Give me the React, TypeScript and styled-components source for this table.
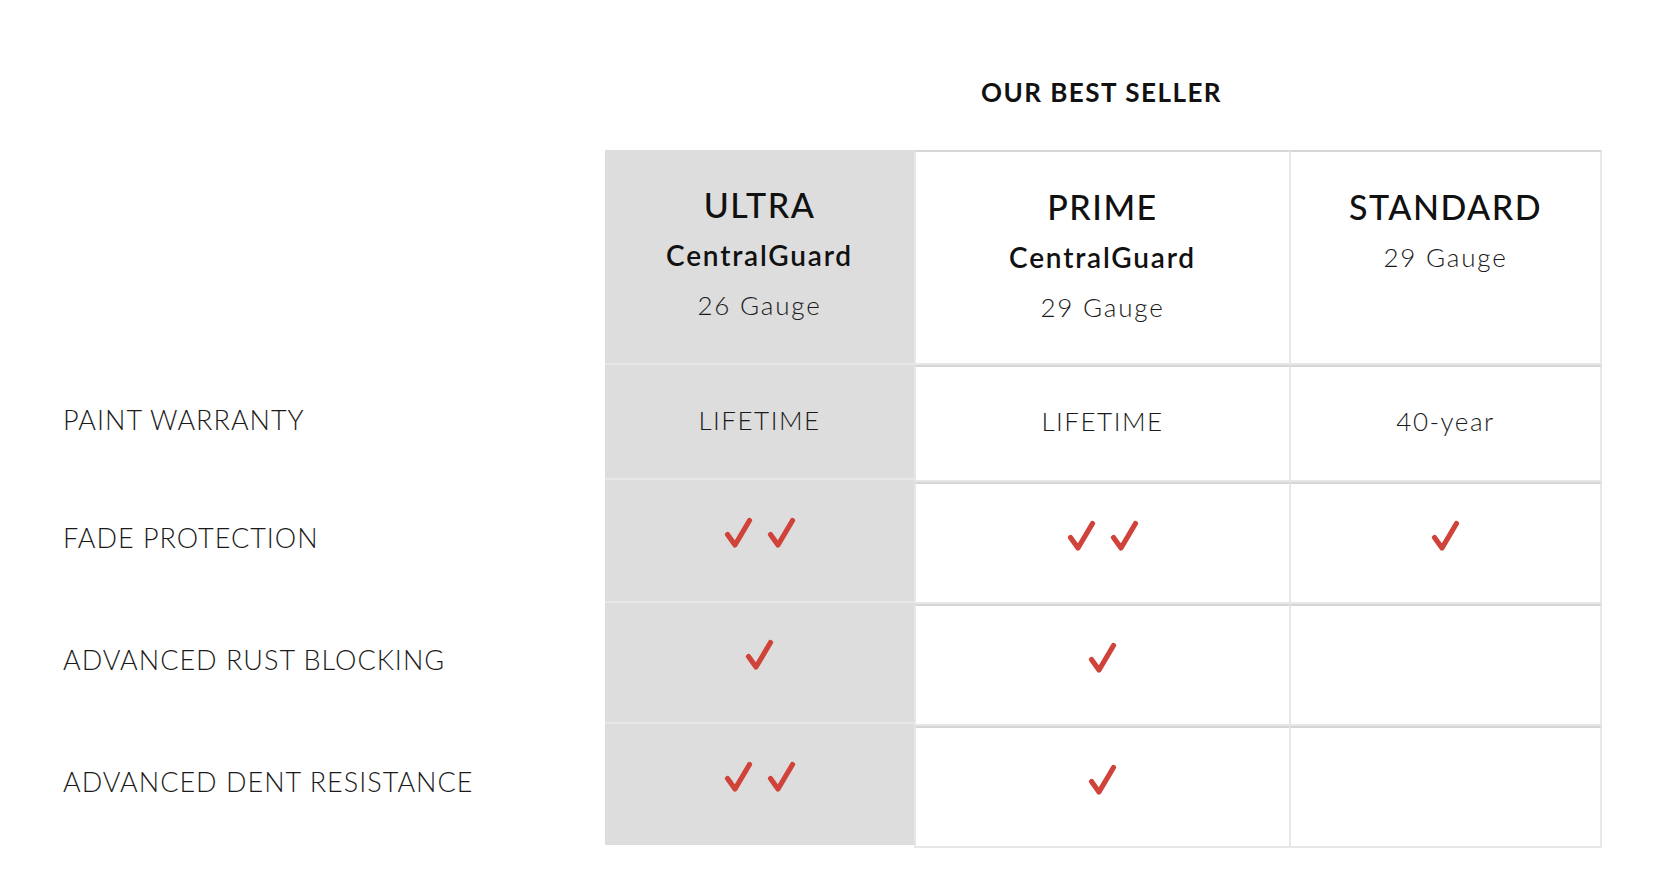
import React from 'react';
import styled, { createGlobalStyle } from 'styled-components';

const GlobalStyle = createGlobalStyle`
html, body {
    margin: 0;
    padding: 0;
    background: #fff;
}
body {
    font-family: 'Lato', 'Liberation Sans', sans-serif;
    color: #111;
}
`;

const Page = styled.div`
box-sizing: border-box;
width: 1676px;
`;

const TitleRow = styled.div`
display: grid;
grid-template-columns: 605px 309px 375px 313px;
height: 150px;
`;

const Title = styled.h2`
grid-column: 3;
margin: 0;
padding-top: 77px;
text-align: center;
font-size: 26px;
line-height: 30px;
font-weight: 700;
letter-spacing: 1.5px;
color: #111;
`;

const Table = styled.div`
display: flex;
flex-direction: row;
align-items: flex-start;
`;

interface ColumnProps {
    readonly width: string;
}
const Column = styled.div<ColumnProps>`
box-sizing: border-box;
display: flex;
flex-direction: column;
width: ${props => props.width};
flex-shrink: 0;
`;

// lift = how far (px) the content sits above the true centre of the cell
interface CellProps {
    readonly h: number;
    readonly lift?: number;
}

const LabelCell = styled.div<CellProps>`
box-sizing: border-box;
display: flex;
align-items: center;
height: ${props => props.h}px;
padding: 0 0 ${props => (props.lift || 0) * 2}px 63px;
font-size: 27px;
font-weight: 300;
letter-spacing: 1px;
color: #1a1a1a;
`;

const FeaturedCell = styled.div<CellProps & { last?: boolean; top?: boolean }>`
box-sizing: border-box;
display: flex;
flex-direction: column;
align-items: center;
justify-content: ${props => props.top ? 'flex-start' : 'center'};
height: ${props => props.h}px;
padding-bottom: ${props => (props.lift || 0) * 2}px;
background-color: #dddddd;
border-bottom: ${props => props.last ? 'none' : '2px solid #e7e7e7'};
`;

const PlainCell = styled.div<CellProps & { edge?: boolean; top?: boolean }>`
box-sizing: border-box;
display: flex;
flex-direction: column;
align-items: center;
justify-content: ${props => props.top ? 'flex-start' : 'center'};
height: ${props => props.h}px;
padding-bottom: ${props => (props.lift || 0) * 2}px;
background-color: #fff;
border-top: 2px solid #d6d6d6;
border-bottom: 2px solid #e7e7e7;
border-left: 2px solid #e7e7e7;
border-right: ${props => props.edge ? '2px solid #e7e7e7' : 'none'};
`;

const HeadCell = styled.div`
box-sizing: border-box;
display: flex;
flex-direction: column;
align-items: center;
padding-top: 30px;
text-align: center;
`;

const PlanName = styled.div`
font-size: 34px;
line-height: 50px;
font-weight: 500;
letter-spacing: 1.5px;
color: #111;
`;

const Brand = styled.div`
font-size: 28px;
line-height: 50px;
font-weight: 600;
letter-spacing: 1.8px;
color: #111;
`;

const Gauge = styled.div`
font-size: 26px;
line-height: 50px;
font-weight: 300;
letter-spacing: 1.8px;
color: #1a1a1a;
`;

const Value = styled.div`
font-size: 26px;
font-weight: 300;
letter-spacing: 1.5px;
color: #1a1a1a;
`;

const Checks = styled.div`
display: flex;
flex-direction: row;
gap: 14px;
`;

const Check: React.FC = () => (
    <svg width="29" height="31" viewBox="0 0 29 31">
        <path d="M3.5 17.5 L11 28 L25.5 3.5" fill="none" stroke="#cf433a" strokeWidth="5.2" strokeLinecap="round" strokeLinejoin="round" />
    </svg>
);

const CheckGroup: React.FC<{ count: number }> = ({ count }) => (
    <Checks>
        {Array.from({ length: count }).map((_, i) => <Check key={i} />)}
    </Checks>
);

type Plan = {
    name: string;
    brand?: string;
    gauge: string;
    warranty: string;
    fade: number;
    rust: number;
    dent: number;
};

const plans: Plan[] = [
    { name: 'ULTRA', brand: 'CentralGuard', gauge: '26 Gauge', warranty: 'LIFETIME', fade: 2, rust: 1, dent: 2 },
    { name: 'PRIME', brand: 'CentralGuard', gauge: '29 Gauge', warranty: 'LIFETIME', fade: 2, rust: 1, dent: 1 },
    { name: 'STANDARD', gauge: '29 Gauge', warranty: '40-year', fade: 1, rust: 0, dent: 0 },
];

const labels = ['PAINT WARRANTY', 'FADE PROTECTION', 'ADVANCED RUST BLOCKING', 'ADVANCED DENT RESISTANCE'];

const plainHeights = [215, 117, 122, 122, 122];
const featuredHeights = [215, 115, 123, 121, 121];

const renderBody = (plan: Plan, row: number) => {
    if (row === 0) return <Value>{plan.warranty}</Value>;
    const count = row === 1 ? plan.fade : row === 2 ? plan.rust : plan.dent;
    return count > 0 ? <CheckGroup count={count} /> : null;
};

const Header: React.FC<{ plan: Plan }> = ({ plan }) => (
    <HeadCell>
        <PlanName>{plan.name}</PlanName>
        {plan.brand && <Brand>{plan.brand}</Brand>}
        <Gauge>{plan.gauge}</Gauge>
    </HeadCell>
);

const App: React.FC = () => {
    const [ultra, prime, standard] = plans;

    return (
        <Page>
            <GlobalStyle />
            <TitleRow>
                <Title>OUR BEST SELLER</Title>
            </TitleRow>
            <Table>
                <Column width="605px">
                    <LabelCell h={plainHeights[0]} />
                    {labels.map((l, i) => (
                        <LabelCell key={l} h={plainHeights[i + 1]} lift={i === 0 ? 4 : 6}>{l}</LabelCell>
                    ))}
                </Column>

                <Column width="309px">
                    <FeaturedCell h={featuredHeights[0]} top>
                        <Header plan={ultra} />
                    </FeaturedCell>
                    {labels.map((l, i) => (
                        <FeaturedCell key={l} h={featuredHeights[i + 1]} lift={i === 0 ? 2 : 8} last={i === labels.length - 1}>
                            {renderBody(ultra, i)}
                        </FeaturedCell>
                    ))}
                </Column>

                {[prime, standard].map((plan, idx) => (
                    <Column key={plan.name} width={idx === 0 ? '375px' : '313px'}>
                        <PlainCell h={plainHeights[0]} edge={idx === 1} top>
                            <Header plan={plan} />
                        </PlainCell>
                        {labels.map((l, i) => (
                            <PlainCell key={l} h={plainHeights[i + 1]} edge={idx === 1} lift={i === 0 ? 3 : 8}>
                                {renderBody(plan, i)}
                            </PlainCell>
                        ))}
                    </Column>
                ))}
            </Table>
        </Page>
    );
};

export default App;
